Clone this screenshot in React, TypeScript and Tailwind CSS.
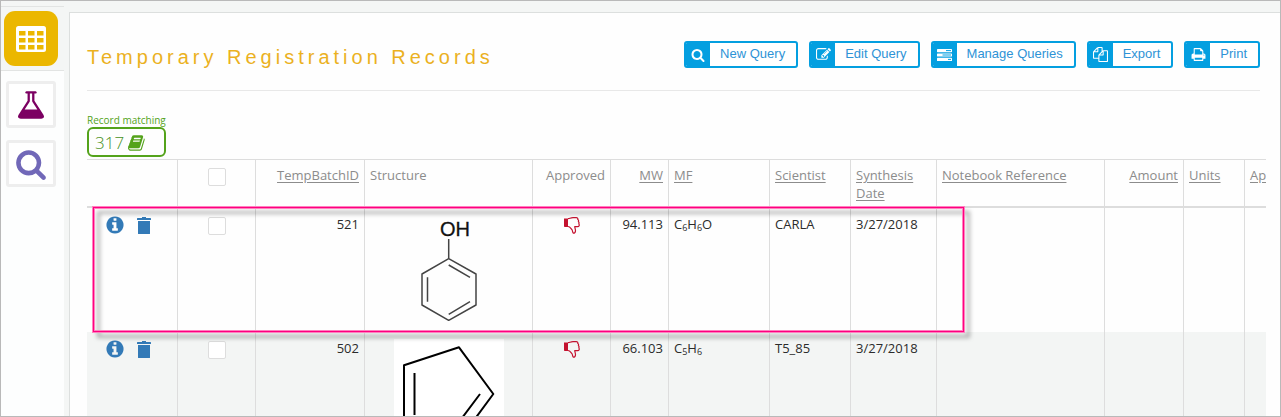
import React from "react";

const paths = {
  search:
    "M1216 832q0-185-131.5-316.5t-316.5-131.5-316.5 131.5-131.5 316.5 131.5 316.5 316.5 131.5 316.5-131.5 131.5-316.5zm512 832q0 52-38 90t-90 38q-54 0-90-38l-343-342q-179 124-399 124-143 0-273.5-55.5t-225-150-150-225-55.5-273.5 55.5-273.5 150-225 225-150 273.5-55.5 273.5 55.5 225 150 150 225 55.5 273.5q0 220-124 399l343 343q37 37 37 90z",
  edit: "M888 1184l116-116-152-152-116 116v56h96v96h56zm440-720q-16-16-33 1l-350 350q-17 17-1 33t33-1l350-350q17-17 1-33zm80 594v190q0 119-84.5 203.5t-203.5 84.5h-832q-119 0-203.5-84.5t-84.5-203.5v-832q0-119 84.5-203.5t203.5-84.5h832q63 0 117 25 15 7 18 23 3 17-9 29l-49 49q-14 14-32 8-23-6-45-6h-832q-66 0-113 47t-47 113v832q0 66 47 113t113 47h832q66 0 113-47t47-113v-126q0-13 9-22l64-64q15-15 35-7t20 29zm-96-738l288 288-672 672h-288v-288zm444 132l-92 92-288-288 92-92q28-28 68-28t68 28l152 152q28 28 28 68t-28 68z",
  copy: "M1696 384q40 0 68 28t28 68v1216q0 40-28 68t-68 28h-960q-40 0-68-28t-28-68v-288h-544q-40 0-68-28t-28-68v-672q0-40 20-88t48-76l408-408q28-28 76-48t88-20h416q40 0 68 28t28 68v328q68-40 128-40h416zm-544 213l-299 299h299v-299zm-640-384l-299 299h299v-299zm196 647l316-316v-416h-384v416q0 40-28 68t-68 28h-416v640h512v-256q0-40 20-88t48-76zm956 804v-1152h-384v416q0 40-28 68t-68 28h-416v640h896z",
  print:
    "M448 1536h896v-256h-896v256zm0-640h896v-384h-160q-40 0-68-28t-28-68v-160h-640v640zm1152 64q0-26-19-45t-45-19-45 19-19 45 19 45 45 19 45-19 19-45zm128 0v416q0 13-9.5 22.5t-22.5 9.5h-224v160q0 40-28 68t-68 28h-960q-40 0-68-28t-28-68v-160h-224q-13 0-22.5-9.5t-9.5-22.5v-416q0-79 56.5-135.5t135.5-56.5h64v-544q0-40 28-68t68-28h672q40 0 88 20t76 48l152 152q28 28 48 76t20 88v256h64q79 0 135.5 56.5t56.5 135.5z",
  info: "M1152 1376v-160q0-14-9-23t-23-9h-96v-512q0-14-9-23t-23-9h-320q-14 0-23 9t-9 23v160q0 14 9 23t23 9h96v320h-96q-14 0-23 9t-9 23v160q0 14 9 23t23 9h448q14 0 23-9t9-23zm-128-896v-160q0-14-9-23t-23-9h-192q-14 0-23 9t-9 23v160q0 14 9 23t23 9h192q14 0 23-9t9-23zm640 416q0 209-103 385.5t-279.5 279.5-385.5 103-385.5-103-279.5-279.5-103-385.5 103-385.5 279.5-279.5 385.5-103 385.5 103 279.5 279.5 103 385.5z",
  flask:
    "M1591 1448q56 89 21.5 152.5t-140.5 63.5h-1152q-106 0-140.5-63.5t21.5-152.5l503-793v-399h-64q-26 0-45-19t-19-45 19-45 45-19h512q26 0 45 19t19 45-19 45-45 19h-64v399zm-779-725l-272 429h712l-272-429-20-31v-436h-128v436z",
  book: "M1639 478q40 57 18 129l-275 906q-19 64-76.5 107.5t-122.5 43.5h-923q-77 0-148.5-53.5t-99.5-131.5q-24-67-2-127 0-4 3-27t4-37q1-8-3-21.5t-3-19.5q2-11 8-21t16.5-23.5 16.5-23.5q23-38 45-91.5t30-91.5q3-10 .5-30t-.5-28q3-11 17-28t17-23q21-36 42-92t25-90q1-9-2.5-32t.5-28q4-13 22-30.5t22-22.5q19-26 42.5-84.5t27.5-96.5q1-8-3-25.5t-2-26.5q2-8 9-18t18-23 17-21q8-12 16.5-30.5t15-35 16-36 19.5-32 26.5-23.5 36-11.5 47.5 5.5l-1 3q38-9 51-9h761q74 0 114 56t18 130l-274 906q-36 119-71.5 153.5t-128.5 34.5h-869q-27 0-38 15-11 16-1 43 24 70 144 70h923q29 0 56-15.5t35-41.5l300-987q7-22 5-57 38 15 59 43zm-1064 2q-4 13 2 22.5t20 9.5h608q13 0 25.5-9.5t16.5-22.5l21-64q4-13-2-22.5t-20-9.5h-608q-13 0-25.5 9.5t-16.5 22.5zm-83 256q-4 13 2 22.5t20 9.5h608q13 0 25.5-9.5t16.5-22.5l21-64q4-13-2-22.5t-20-9.5h-608q-13 0-25.5 9.5t-16.5 22.5z",
};

function Glyph({ name, className }: { name: keyof typeof paths; className: string }) {
  return (
    <svg viewBox="0 0 1792 1792" fill="currentColor" aria-hidden="true" className={className}>
      <path d={paths[name]} />
    </svg>
  );
}

function TableIcon() {
  return (
    <svg viewBox="0 0 30 26" aria-hidden="true" className="h-[26px] w-[30px]">
      <rect width="30" height="26" rx="2.500" fill="#fff" />
      {[5, 12, 19].map((y) =>
        [3, 12, 21].map((x) => (
          <rect key={`${x}-${y}`} x={x} y={y} width="6.500" height="4.500" fill="#ebb700" />
        )),
      )}
    </svg>
  );
}

function TasksIcon() {
  return (
    <svg viewBox="0 0 15 12" aria-hidden="true" className="h-3 w-[15px]">
      <g fill="#fff">
        <rect y="0" width="15" height="3.200" rx="0.600" />
        <rect y="4.400" width="15" height="3.200" rx="0.600" />
        <rect y="8.800" width="15" height="3.200" rx="0.600" />
      </g>
      <g fill="#049fe0">
        <rect x="9" y="1.100" width="5" height="1" />
        <rect x="5.500" y="5.500" width="8.500" height="1" />
        <rect x="11" y="9.900" width="3" height="1" />
      </g>
    </svg>
  );
}

function TrashIcon() {
  return (
    <svg viewBox="0 0 14 17" fill="currentColor" aria-hidden="true" className="h-[17px] w-[14px]">
      <path d="M5 0h4v1h4.400q.6 0 .6.600V3H0V1.600Q0 1 .6 1H5zM1 4h12v12.400q0 .6-.6.600H1.600q-.6 0-.6-.600z" />
    </svg>
  );
}

function ThumbDownIcon() {
  return (
    <svg viewBox="0 0 16 17" aria-label="Not approved" role="img" className="mx-auto mt-[2px] h-[17px] w-4">
      <path d="M0 1.500h4V10H.8Q0 10 0 9.200z" fill="#c4122f" />
      <path
        d="M4 1.700C6 1.500 6.500.7 9 .7h3.200c1.200 0 1.800.8 1.600 1.900.8.500.9 1.300.6 2 .7.700.8 1.500.4 2.200.9 1.400.3 2.900-1.200 2.900h-2.900c.3 1.600.8 2.700.8 4 0 1.600-.8 2.500-2.200 2.500-.9-1-.6-2.400-1.300-3.500C6.700 11.300 6 9.500 4 9.500"
        fill="none"
        stroke="#c4122f"
        strokeWidth="1.200"
        strokeLinejoin="round"
      />
    </svg>
  );
}

function Phenol() {
  return (
    <svg viewBox="0 0 110 110" role="img" aria-label="Phenol" className="mx-auto size-[110px]">
      <g fill="none" stroke="#444" strokeWidth="1.500" strokeLinejoin="round">
        <path d="M54.700 24V43.700L82 59V90L54.700 105.300 28 90V59L54.700 43.700" />
        <path d="M33.500 62.300V86.700M54.700 50 76 62.300M76 86.700 54.700 99.300" />
      </g>
      <text x="46" y="20.500" fontSize="20" fill="#111" stroke="#111" strokeWidth="0.300" className="font-['Liberation_Sans',sans-serif]">
        OH
      </text>
    </svg>
  );
}

function Cyclopentadiene() {
  return (
    <svg viewBox="0 0 110 110" role="img" aria-label="Cyclopentadiene" className="mx-auto size-[110px] bg-white">
      <g fill="none" stroke="#000" strokeWidth="2" strokeLinejoin="round">
        <path d="M10 26.300 65 8.300 99.300 55 65 101.500 10 84z" />
        <path d="M20.500 34V76M86 55 59 91" />
      </g>
    </svg>
  );
}

const actions = [
  { label: "New Query", icon: <Glyph name="search" className="size-[14px]" /> },
  { label: "Edit Query", icon: <Glyph name="edit" className="size-[15px]" /> },
  { label: "Manage Queries", icon: <TasksIcon /> },
  { label: "Export", icon: <Glyph name="copy" className="size-[15px]" /> },
  { label: "Print", icon: <Glyph name="print" className="size-[15px]" /> },
];

type Column = { label: string; width: string; align?: string; plain?: boolean };

const columns: Column[] = [
  { label: "TempBatchID", width: "w-[109px]", align: "text-right" },
  { label: "Structure", width: "w-[168px]", plain: true },
  { label: "Approved", width: "w-[78px]", align: "text-right", plain: true },
  { label: "MW", width: "w-[58px]", align: "text-right" },
  { label: "MF", width: "w-[101px]" },
  { label: "Scientist", width: "w-[81px]" },
  { label: "Synthesis Date", width: "w-[86px]" },
  { label: "Notebook Reference", width: "w-[168px]" },
  { label: "Amount", width: "w-[79px]", align: "text-right" },
  { label: "Units", width: "w-[61px]" },
];

const records = [
  {
    id: "521",
    structure: <Phenol />,
    mw: "94.113",
    mf: [["C", "6"], ["H", "6"], ["O", ""]],
    scientist: "CARLA",
    date: "3/27/2018",
  },
  {
    id: "502",
    structure: <Cyclopentadiene />,
    mw: "66.103",
    mf: [["C", "5"], ["H", "6"]],
    scientist: "T5_85",
    date: "3/27/2018",
  },
];

function Tick({ label }: { label: string }) {
  return (
    <input
      type="checkbox"
      aria-label={label}
      className="mx-auto mt-[2px] block size-[18px] appearance-none rounded-[2px] border border-[#ddd] bg-white checked:bg-[#337ab7]"
    />
  );
}

const headCell = "border-t border-r border-b-2 border-[#ddd] px-[5px] pt-[6px] pb-1 align-top font-normal";
const cell = "border-r border-[#ddd] px-[5px] py-[7px] align-top";

export default function App() {
  return (
    <div className="flex h-screen overflow-hidden border border-[#b9b9b9] bg-[#f4f6f5] font-['Open_Sans','Noto_Sans',sans-serif] text-[13px] leading-[18px] text-[#2b2b2b]">
      <nav aria-label="Main" className="mt-[5px] w-[63px] shrink-0 border-t border-[#e2e4e3] bg-[#fdfefe]">
        <div className="border-b border-[#e2e4e3] bg-[#f4f6f5] pt-1 pb-1 pl-[3px]">
          <button type="button" aria-label="Records" className="flex h-[55px] w-[54px] items-center justify-center rounded-[11px] bg-[#ebb700]">
            <TableIcon />
          </button>
        </div>
        <div className="flex flex-col gap-3 pt-[10px] pl-[5px]">
          <button type="button" aria-label="Experiments" className="flex h-[47px] w-[50px] items-center justify-center rounded-[3px] border-[3px] border-[#eee] bg-white text-[#7c0062]">
            <Glyph name="flask" className="size-8" />
          </button>
          <button type="button" aria-label="Search" className="flex h-[47px] w-[50px] items-center justify-center rounded-[3px] border-[3px] border-[#eee] bg-white text-[#7168b8]">
            <Glyph name="search" className="size-8" />
          </button>
        </div>
      </nav>

      <main className="mt-[11px] ml-[5px] min-w-0 flex-1 border-t border-l border-[#dcdfde] bg-[#fefefe] pr-[14px] pl-[17px]">
        <header className="mr-[6px] flex h-[78px] items-start justify-between border-b border-[#e8e8e8] pt-7">
          <h1 className="pt-1 font-['Liberation_Sans',sans-serif] text-[20px] leading-6 tracking-[4px] whitespace-nowrap text-[#ebb11f]">
            Temporary Registration Records
          </h1>
          <div className="flex gap-[11px]">
            {actions.map((action) => (
              <button
                key={action.label}
                type="button"
                className="flex h-[27px] items-stretch overflow-hidden rounded-[3px] border-2 border-[#049fe0] bg-white font-['Liberation_Sans',sans-serif] text-[13px] leading-[22px] whitespace-nowrap text-[#2e93d6]"
              >
                <span className="flex w-6 items-center justify-center bg-[#049fe0] text-white">{action.icon}</span>
                <span className="pr-[11px] pl-[10px]">{action.label}</span>
              </button>
            ))}
          </div>
        </header>

        <section aria-label="Record count" className="mt-[22px] w-[79px] text-[#54a31b]">
          <p className="text-[10px] leading-[14px] whitespace-nowrap">Record matching</p>
          <p className="flex h-[30px] items-center gap-1 rounded-[6px] border-2 border-[#54a31b] pt-[2px] pl-[6px]">
            <span className="text-[17px] leading-6 font-light text-[#46901a]">317</span>
            <Glyph name="book" className="size-[18px]" />
          </p>
        </section>

        <div className="relative mt-[2px] overflow-hidden">
          <table className="w-full min-w-[1179px] table-fixed border-separate border-spacing-0 text-left">
            <thead>
              <tr className="text-[#8c8c8c]">
                <th scope="col" aria-label="Actions" className={`w-[91px] ${headCell}`} />
                <th scope="col" className={`w-[78px] ${headCell}`}>
                  <Tick label="Select all records" />
                </th>
                {columns.map((column) => (
                  <th key={column.label} scope="col" className={`${headCell} ${column.width} ${column.align ?? ""}`}>
                    {column.plain ? (
                      column.label
                    ) : (
                      <a href="#sort" className="underline underline-offset-2">
                        {column.label}
                      </a>
                    )}
                  </th>
                ))}
                <th scope="col" className="border-t border-b-2 border-[#ddd] pt-[6px] pb-1 pl-[5px] align-top font-normal">
                  <a href="#sort" className="underline underline-offset-2">
                    Ap
                  </a>
                </th>
              </tr>
            </thead>
            <tbody>
              {records.map((record) => (
                <tr key={record.id} className="even:bg-[#f3f5f4]">
                  <td className={cell}>
                    <div className="flex gap-3 pl-[13px] text-[#337ab7]">
                      <button type="button" aria-label={`Details of ${record.id}`}>
                        <Glyph name="info" className="size-5" />
                      </button>
                      <button type="button" aria-label={`Delete ${record.id}`}>
                        <TrashIcon />
                      </button>
                    </div>
                  </td>
                  <td className={cell}>
                    <Tick label={`Select ${record.id}`} />
                  </td>
                  <td className={`text-right ${cell}`}>{record.id}</td>
                  <td className={cell}>{record.structure}</td>
                  <td className={cell}>
                    <ThumbDownIcon />
                  </td>
                  <td className={`text-right ${cell}`}>{record.mw}</td>
                  <td className={cell}>
                    {record.mf.map(([element, count]) => (
                      <React.Fragment key={element}>
                        {element}
                        {count && <sub className="text-[9px]">{count}</sub>}
                      </React.Fragment>
                    ))}
                  </td>
                  <td className={cell}>{record.scientist}</td>
                  <td className={cell}>{record.date}</td>
                  <td className={cell} />
                  <td className={cell} />
                  <td className={cell} />
                  <td />
                </tr>
              ))}
            </tbody>
          </table>
          <div
            aria-hidden="true"
            className="pointer-events-none absolute top-12 left-[6px] h-[125px] w-[871px] border border-[#ff007f] shadow-[0_0_0_1px_#ff80bf,inset_0_0_0_1px_#ff80bf] drop-shadow-[5px_5px_2px_rgba(0,0,0,0.3)]"
          />
        </div>
      </main>
    </div>
  );
}
